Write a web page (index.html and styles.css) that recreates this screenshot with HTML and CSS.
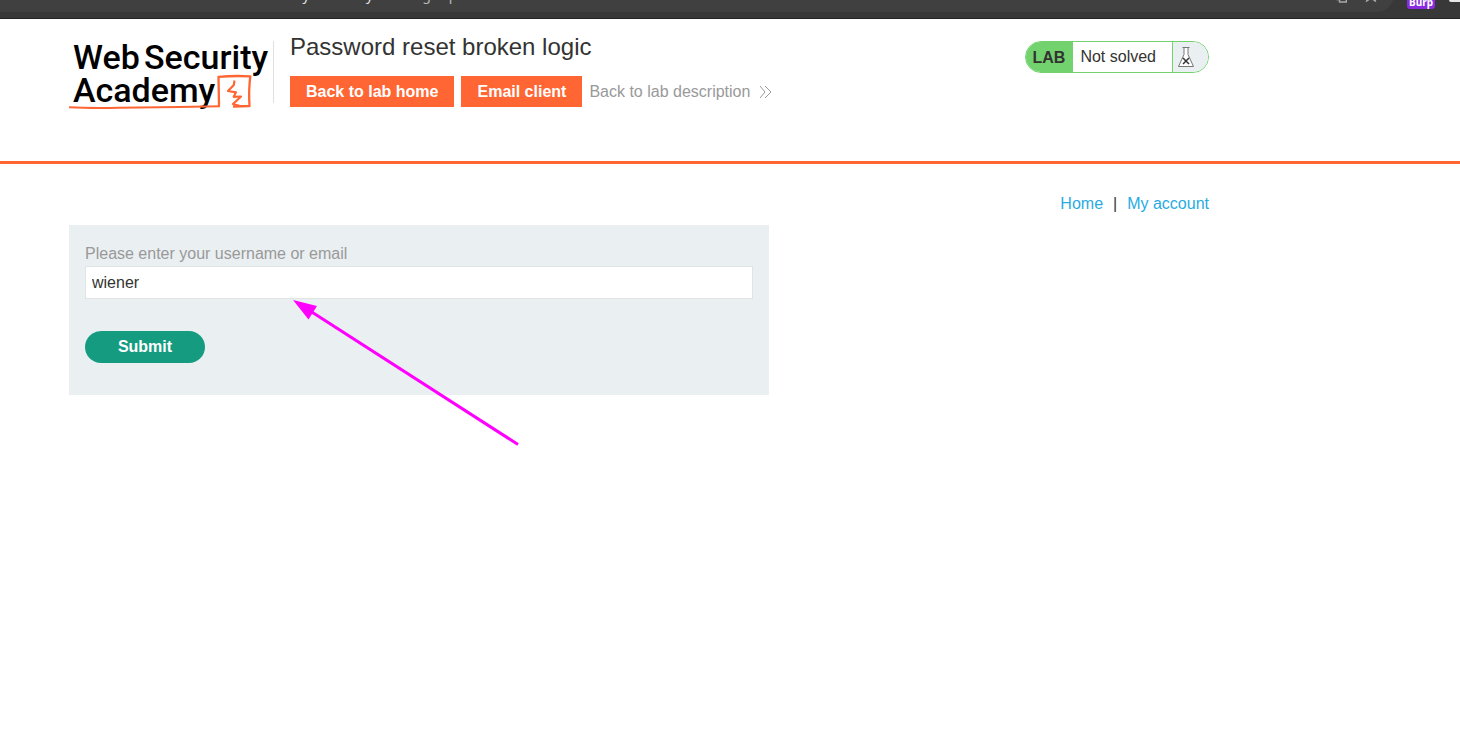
FILE: index.html
```html
<!DOCTYPE html>
<html lang="en">
<head>
<meta charset="utf-8">
<title>Password reset broken logic</title>
<link rel="stylesheet" href="styles.css">
</head>
<body>
<div class="toolbar">
  <div class="address">
    <span class="url">web-security-academy.net<span class="url-path">/forgot-password</span></span>
    <svg class="address-icon" width="12" height="16" viewBox="0 0 12 16" fill="none" stroke="#a8a8a8" stroke-width="1.4"><path d="M5 6h5.300v9H3.500v-4M1 9h3v3.500H1z"/></svg>
    <svg class="address-icon" width="14" height="14" viewBox="0 0 14 14" fill="none" stroke="#a8a8a8" stroke-width="1.400"><path d="M7 1l1.800 4 4.200.4-3.200 2.800 1.500 4.800L7 10.200 2.700 13l1.500-4.800L1 5.400 5.200 5z"/></svg>
  </div>
  <span class="extension">Burp</span>
  <svg class="panel-icon" width="12" height="12" viewBox="0 0 12 12" fill="none" stroke="#e8e8e8" stroke-width="2"><path d="M14 10H3Q2 10 2 9V1"/></svg>
</div>

<header class="lab-header">
  <div class="container header-row">
    <a class="logo" href="#" aria-label="Web Security Academy">
      <svg width="204" height="74" viewBox="0 0 204 74">
        <g class="logo-text"><text x="4" y="32">Web</text><text x="75" y="32">Security</text><text x="4" y="65">Academy</text></g>
        <g fill="none" stroke="#ff6633" stroke-linejoin="round">
          <path stroke-width="2" d="M0 70.300Q20 71.300 50 70.800T110 70L151 69.200"/>
          <path stroke-width="2.300" d="M150 69L149.500 39.800Q165 38.500 181.300 39.300Q179.500 53 180.500 69L164 69.500"/>
          <path stroke-width="2.200" d="M165.500 43.500L164.800 48L159 54L167 55.300L164.700 59.800L172 59.500L164 67L171 69"/>
        </g>
      </svg>
    </a>
    <div class="title-block">
      <h2>Password reset broken logic</h2>
      <div class="actions">
        <a class="button" href="#">Back to lab home</a>
        <a class="button" href="#">Email client</a>
        <a class="description" href="#">Back to lab description
          <svg width="13" height="14" viewBox="0 0 13 14" fill="none" stroke="#999" stroke-width="1"><path d="M1 1l5 6-5 6M6 1l6 6-6 6"/></svg>
        </a>
      </div>
    </div>
    <div class="status">
      <span class="status-lab">LAB</span>
      <span class="status-text">Not solved</span>
      <span class="status-icon">
        <svg width="18" height="22" viewBox="0 0 18 22"><path d="M5.500 1.500h7M7 1.500v7L1.500 20.500h15L11 8.500v-7" fill="#fff" stroke="#777" stroke-width="1"/><path d="M6 12l6 6M12 12l-6 6" stroke="#333" stroke-width="1.500"/></svg>
      </span>
    </div>
  </div>
</header>

<main class="container">
  <nav class="links"><a href="#">Home</a><span>|</span><a href="#">My account</a></nav>
  <form class="reset-form">
    <label for="username">Please enter your username or email</label>
    <input id="username" type="text" name="username" value="wiener">
    <button type="submit">Submit</button>
    <svg class="arrow" width="228" height="148" viewBox="0 0 228 148" fill="#ff00ff"><path d="M0 0L24 6L15.500 19.500Z"/><path d="M18 11.500L225 144.500" stroke="#ff00ff" stroke-width="3"/></svg>
  </form>
</main>
</body>
</html>
```
FILE: styles.css
```css
* { box-sizing: border-box; }
body { min-height: 100vh; margin: 0; background: #fff; color: #333332; font: 16px/20px "Liberation Sans", Arial, sans-serif; }
a { text-decoration: none; }
svg { display: block; }

.toolbar { display: flex; align-items: flex-end; height: 19px; overflow: hidden; background: #383838; border-bottom: 1px solid #242424; }
.address { display: flex; align-items: center; gap: 16px; flex: 1; max-width: 1395px; height: 34px; margin-bottom: 6px; padding: 0 16px 0 226px; border-radius: 0 17px 17px 0; background: #404040; }
.url { flex: 1; color: #e0e0e0; font: 14px/20px "Noto Sans", sans-serif; }
.url-path { color: #b8b8b8; }
.extension { margin: 0 0 9px 13px; padding: 0 2px; border-radius: 3px; background: #8a2be2; color: #fff; font: bold 10px/13px "Noto Sans", sans-serif; }
.panel-icon { flex: none; margin: 0 0 15px 13px; }

.container { max-width: 1209px; padding-left: 69px; }
.lab-header { min-height: 145px; padding-top: 18px; border-bottom: 3px solid #ff6633; }
.header-row { display: flex; align-items: flex-start; }
.logo { width: 205px; height: 62px; margin-top: 4px; border-right: 1px solid #e0e0e0; }
.logo svg { margin-top: -4px; overflow: visible; }
.logo-text { fill: #000; font: 500 34px Roboto, sans-serif; }
.title-block { margin-left: 16px; }
h2 { margin: 0; font-size: 24px; line-height: 20px; font-weight: 400; }
.actions { display: flex; align-items: center; margin-top: 19px; }
.button { margin-right: 7px; padding: 6px 16px 5px; background: #ff6633; color: #fff; font-weight: 700; }
.description { display: flex; align-items: center; gap: 9px; color: #999; }
.status { display: flex; height: 32px; margin: 4px 0 0 auto; overflow: hidden; border: 1px solid #72d26e; border-radius: 16px; line-height: 30px; }
.status-lab { padding: 0 8px 0 7px; background: #72d26e; font-weight: 700; line-height: 32px; }
.status-text { padding: 0 16px 0 7px; }
.status-icon { display: flex; align-items: center; padding: 0 13px 0 4px; border-left: 1px solid #72d26e; background: #eaeff2; }

.links { display: flex; justify-content: flex-end; gap: 10px; padding: 30px 0 11px; }
.links a { color: #29abe2; }
.reset-form { position: relative; max-width: 700px; padding: 19px 16px 32px; background: #eaeff2; }
label { display: block; color: #999; }
input { display: block; width: 100%; height: 33px; margin: 2px 0 32px; padding: 0 6px; border: 1px solid #e0e4e5; border-radius: 0; background: #fff; color: #333332; font: inherit; }
.reset-form button { display: block; min-width: 120px; height: 32px; padding: 0 32px; border: 0; border-radius: 16px; background: #159c80; color: #fff; font: inherit; font-weight: 700; }
.arrow { position: absolute; left: 224px; top: 75px; overflow: visible; }
```
